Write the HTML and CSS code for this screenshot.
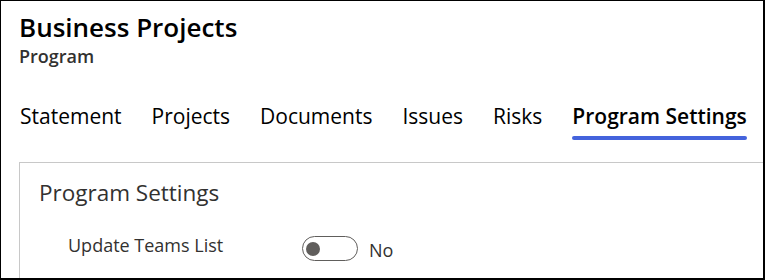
FILE: index.html
```html
<!DOCTYPE html>
<html lang="en">
<head>
  <meta charset="UTF-8">
  <title>Business Projects</title>
  <link rel="stylesheet" href="styles.css">
</head>
<body>
  <div class="page">
    <!-- page header -->
    <div class="header">
      <h1 class="title">Business Projects</h1>
      <div class="subtitle">Program</div>
    </div>

    <!-- tab strip -->
    <nav class="tabs">
      <a class="tab">Statement</a>
      <a class="tab">Projects</a>
      <a class="tab">Documents</a>
      <a class="tab">Issues</a>
      <a class="tab">Risks</a>
      <a class="tab active">Program Settings</a>
    </nav>

    <!-- settings panel -->
    <div class="panel">
      <h2 class="panel-title">Program Settings</h2>
      <div class="field">
        <label class="field-label">Update Teams List</label>
        <div class="toggle">
          <span class="switch"><span class="knob"></span></span>
          <span class="toggle-text">No</span>
        </div>
      </div>
    </div>
  </div>
</body>
</html>
```

FILE: styles.css
```css
html, body {
  margin: 0;
  padding: 0;
  background: #fff;
}
body {
  font-family: "Open Sans", "Noto Sans", Arial, sans-serif;
  color: #000;
}
.page {
  box-sizing: border-box;
  height: 280px;
  border: 1px solid #000;
  border-right-width: 2px;
  border-bottom-width: 2px;
  overflow: hidden;
  padding: 9px 0 0 18px;
}
.title {
  margin: 0;
  font-size: 26px;
  font-weight: 600;
  line-height: 34px;
}
.subtitle {
  font-size: 18px;
  font-weight: 600;
  color: #323130;
  line-height: 24px;
}
.tabs {
  display: flex;
  gap: 30px;
  margin-top: 34px;
  padding-left: 1px;
}
.tab {
  display: flex;
  flex-direction: column;
  font-size: 21px;
  line-height: 28px;
  color: #000;
  cursor: pointer;
}
.tab.active {
  font-weight: 600;
}
.tab.active::after {
  content: "";
  display: block;
  height: 4px;
  border-radius: 2px;
  background: #4463dc;
  margin-top: 6px;
}
.panel {
  margin-top: 22px;
  margin-right: -10px;
  height: 200px;
  border: 1px solid #c8c8c8;
  padding: 15px 19px 0;
}
.panel-title {
  margin: 0;
  font-size: 22.5px;
  font-weight: 400;
  color: #323130;
  line-height: 30px;
}
.field {
  display: flex;
  align-items: flex-start;
  margin-top: 28px;
  padding-left: 29px;
}
.field-label {
  width: 234px;
  font-size: 18px;
  line-height: 18px;
  color: #323130;
}
.toggle {
  display: flex;
  align-items: flex-start;
  gap: 11px;
}
.switch {
  box-sizing: border-box;
  width: 56px;
  height: 25px;
  border: 1px solid #605e5c;
  border-radius: 13px;
  display: flex;
  align-items: center;
  padding-left: 3px;
}
.knob {
  width: 14px;
  height: 14px;
  border-radius: 50%;
  background: #605e5c;
}
.toggle-text {
  font-size: 18px;
  line-height: 28px;
  color: #323130;
}
```
